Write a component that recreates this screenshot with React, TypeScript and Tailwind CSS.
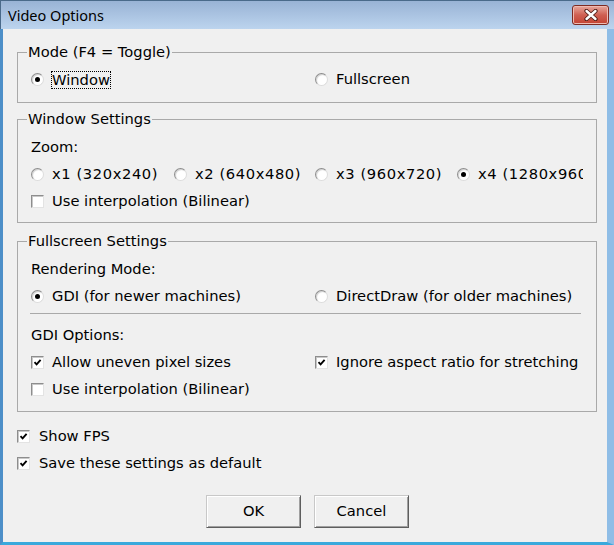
import type { ReactNode } from 'react'

function RadioDot({ checked }: { checked?: boolean }) {
  return (
    <span className="flex h-[13px] w-[13px] shrink-0 items-center justify-center rounded-full border border-t-[#8d8d8d] border-l-[#8d8d8d] border-r-[#dcdcdc] border-b-[#dcdcdc] bg-white shadow-[inset_1px_1px_1px_#d0d0d0]">
      {checked && <span className="h-[5px] w-[5px] rounded-full bg-black" />}
    </span>
  )
}

function Radio({ checked, focus, wide, children }: { checked?: boolean; focus?: boolean; wide?: boolean; children: ReactNode }) {
  return (
    <div className="flex h-[27px] items-center whitespace-nowrap">
      <RadioDot checked={checked} />
      {focus ? (
        <span className="ml-[7px] border border-dotted border-black leading-[16px]">{children}</span>
      ) : (
        <span className={wide ? 'ml-[8px] tracking-[0.6px]' : 'ml-[8px]'}>{children}</span>
      )}
    </div>
  )
}

function Check({ checked, gap = 'ml-[8px]', children }: { checked?: boolean; gap?: string; children: ReactNode }) {
  return (
    <div className="flex h-[27px] items-center whitespace-nowrap">
      <span className="flex h-[13px] w-[13px] shrink-0 items-center justify-center border border-t-[#8d8d8d] border-l-[#8d8d8d] border-r-[#e3e3e3] border-b-[#e3e3e3] bg-white shadow-[inset_1px_1px_0_#c8c8c8]">
        {checked && (
          <svg width="9" height="9" viewBox="0 0 9 9">
            <path d="M1.5 4.2 L3.6 6.3 L7.6 1.9" fill="none" stroke="#000" strokeWidth="1.9" />
          </svg>
        )}
      </span>
      <span className={gap}>{children}</span>
    </div>
  )
}

function Group({ title, className, children }: { title: string; className: string; children: ReactNode }) {
  return (
    <fieldset className={`border border-[#a9a9a9] px-[9px] ${className}`}>
      <legend className="px-px leading-[18px]">{title}</legend>
      <div className="pl-[4px]">{children}</div>
    </fieldset>
  )
}

const btn =
  'h-[33px] w-[95px] border border-t-[#c8c8c8] border-l-[#c8c8c8] border-r-[#5e5e5e] border-b-[#5e5e5e] bg-[#f0f0f0] shadow-[inset_1px_1px_0_#ffffff,inset_-1px_-1px_0_#a0a0a0] leading-none'

export default function App() {
  return (
    <div className="flex h-[545px] w-[614px] flex-col bg-[#bcd4ee] font-['DejaVu_Sans',sans-serif] text-[14.7px] text-black">
      {/* title bar */}
      <div className="flex h-[29px] shrink-0 items-center justify-between border-l border-t border-[#4a6a8a] bg-linear-to-b from-[#99b3d5] to-[#bcd4ee] pl-[7px] pr-[5px]">
        <span className="font-['Noto_Sans',sans-serif] text-[14.5px] leading-none text-black">Video Options</span>
        <div className="flex h-[20px] w-[37px] items-center justify-center rounded-[3px] border border-[#7e2b22] bg-linear-to-b from-[#e6a79c] via-[#cf5f52] to-[#c34232] shadow-[inset_0_0_0_1px_#eebbb2]">
          <svg width="16" height="12" viewBox="0 0 16 12">
            <path d="M3.5 2 L12.5 10 M12.5 2 L3.5 10" stroke="#4a1a14" strokeWidth="4.2" strokeLinecap="round" />
            <path d="M3.5 2 L12.5 10 M12.5 2 L3.5 10" stroke="#ffffff" strokeWidth="2.4" strokeLinecap="round" />
          </svg>
        </div>
      </div>

      {/* client */}
      <div className="flex flex-1 border-b-[3px] border-l-[3px] border-r-[7px] border-b-[#3aa9dc] border-l-[#4d8fc8] border-r-[#8fbde6]">
        <div className="flex flex-1 flex-col bg-[#f0f0f0] pl-[14px] pr-[10px] pt-[14px]">
          <Group title="Mode (F4 = Toggle)" className="pb-[9px] pt-[5px]">
            <div className="grid grid-cols-[284px_1fr]">
              <Radio checked focus>Window</Radio>
              <Radio>Fullscreen</Radio>
            </div>
          </Group>

          <Group title="Window Settings" className="mt-[7px] pb-[7px] pt-[6px]">
            <div className="flex h-[27px] items-center">Zoom:</div>
            <div className="grid grid-cols-[143px_141px_142px_126px]">
              <Radio wide>x1 (320x240)</Radio>
              <Radio wide>x2 (640x480)</Radio>
              <Radio wide>x3 (960x720)</Radio>
              <div className="overflow-hidden">
                <Radio checked wide>x4 (1280x960)</Radio>
              </div>
            </div>
            <Check>Use interpolation (Bilinear)</Check>
          </Group>

          <Group title="Fullscreen Settings" className="mt-[9px] pb-[8px] pt-[6px]">
            <div className="flex h-[27px] items-center">Rendering Mode:</div>
            <div className="grid grid-cols-[284px_1fr]">
              <Radio checked>GDI (for newer machines)</Radio>
              <Radio>DirectDraw (for older machines)</Radio>
            </div>
            <div className="ml-[-1px] mt-[3px] h-px w-[551px] bg-[#a9a9a9]" />
            <div className="mt-[8px] flex h-[27px] items-center">GDI Options:</div>
            <div className="grid grid-cols-[284px_1fr]">
              <Check checked>Allow uneven pixel sizes</Check>
              <Check checked>Ignore aspect ratio for stretching</Check>
            </div>
            <Check>Use interpolation (Bilinear)</Check>
          </Group>

          <div className="mt-[11px]">
            <Check checked gap="ml-[9px]">Show FPS</Check>
            <Check checked gap="ml-[9px]">Save these settings as default</Check>
          </div>

          <div className="mt-[18px] flex justify-center gap-[13px] pl-px">
            <button className={btn}>OK</button>
            <button className={btn}>Cancel</button>
          </div>
        </div>
      </div>
    </div>
  )
}
